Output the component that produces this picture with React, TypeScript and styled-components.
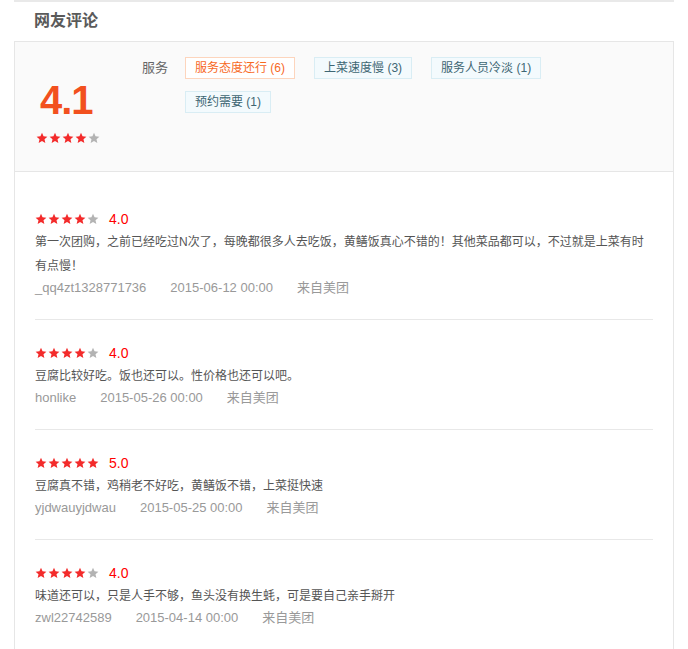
import React from 'react';
import styled, { createGlobalStyle } from 'styled-components';

const GlobalStyle = createGlobalStyle`
  html, body {
    margin: 0;
    padding: 0;
    background: #fff;
  }
  body {
    font-family: "Liberation Sans", "Noto Sans CJK SC", sans-serif;
    color: #555;
  }
`;

type Tag = { label: string; count: number; positive?: boolean };

type Review = {
  score: number;
  text: string;
  user: string;
  time: string;
  source: string;
};

const tags: Tag[] = [
  { label: '服务态度还行', count: 6, positive: true },
  { label: '上菜速度慢', count: 3 },
  { label: '服务人员冷淡', count: 1 },
  { label: '预约需要', count: 1 },
];

const reviews: Review[] = [
  {
    score: 4,
    text: '第一次团购，之前已经吃过N次了，每晚都很多人去吃饭，黄鳝饭真心不错的！其他菜品都可以，不过就是上菜有时有点慢！',
    user: '_qq4zt1328771736',
    time: '2015-06-12 00:00',
    source: '来自美团',
  },
  {
    score: 4,
    text: '豆腐比较好吃。饭也还可以。性价格也还可以吧。',
    user: 'honlike',
    time: '2015-05-26 00:00',
    source: '来自美团',
  },
  {
    score: 5,
    text: '豆腐真不错，鸡稍老不好吃，黄鳝饭不错，上菜挺快速',
    user: 'yjdwauyjdwau',
    time: '2015-05-25 00:00',
    source: '来自美团',
  },
  {
    score: 4,
    text: '味道还可以，只是人手不够，鱼头没有换生蚝，可是要自己亲手掰开',
    user: 'zwl22742589',
    time: '2015-04-14 00:00',
    source: '来自美团',
  },
];

const Star: React.FC<{ on: boolean }> = ({ on }) => (
  <StarSvg viewBox="0 0 24 24" $on={on}>
    <polygon points="12,1.5 15.1,8.6 22.8,9.3 17,14.4 18.7,22 12,18 5.3,22 7,14.4 1.2,9.3 8.9,8.6" />
  </StarSvg>
);

const Stars: React.FC<{ value: number }> = ({ value }) => (
  <StarRow>
    {[1, 2, 3, 4, 5].map((i) => (
      <Star key={i} on={i <= Math.round(value)} />
    ))}
  </StarRow>
);

const App: React.FC = () => {
  return (
    <>
      <GlobalStyle />
      <Section>
        <Title>网友评论</Title>
        <Box>
          <Summary>
            <ScoreColumn>
              <BigScore>4.1</BigScore>
              <Stars value={4.1} />
            </ScoreColumn>
            <TagLabel>服务</TagLabel>
            <TagList>
              {tags.map((t) => (
                <TagItem key={t.label} $positive={t.positive}>
                  {t.label} ({t.count})
                </TagItem>
              ))}
            </TagList>
          </Summary>
          <ReviewList>
            {reviews.map((r, i) => (
              <ReviewItem key={i}>
                <RatingRow>
                  <Stars value={r.score} />
                  <RatingValue>{r.score.toFixed(1)}</RatingValue>
                </RatingRow>
                <ReviewText>{r.text}</ReviewText>
                <Meta>
                  <span>{r.user}</span>
                  <span>{r.time}</span>
                  <span>{r.source}</span>
                </Meta>
              </ReviewItem>
            ))}
          </ReviewList>
        </Box>
      </Section>
    </>
  );
};

export default App;

const Section = styled.section`
  margin: 0 14px;
  border-top: 2px solid #e9e9e9;
`;

const Title = styled.h2`
  margin: 0;
  height: 39px;
  line-height: 38px;
  padding-left: 20px;
  font-size: 16px;
  font-weight: bold;
  color: #5a5a5a;
`;

const Box = styled.div`
  border: 1px solid #e6e6e6;
  border-bottom: none;
`;

const Summary = styled.div`
  display: flex;
  align-items: flex-start;
  height: 130px;
  background: #fafafa;
  border-bottom: 1px solid #e6e6e6;
  box-sizing: border-box;
`;

const ScoreColumn = styled.div`
  width: 106px;
  padding: 38px 0 0 21px;
  display: flex;
  flex-direction: column;
  align-items: flex-start;
`;

const BigScore = styled.div`
  font-size: 40px;
  line-height: 40px;
  font-weight: bold;
  color: #f2501e;
  padding-left: 4px;
  letter-spacing: -1px;
  margin-bottom: 12px;
`;

const StarRow = styled.span`
  display: inline-flex;
  gap: 1px;
`;

const StarSvg = styled.svg<{ $on: boolean }>`
  width: 12px;
  height: 12px;
  fill: ${(p) => (p.$on ? '#f32b2b' : '#b3b3b3')};
`;

const TagLabel = styled.div`
  margin-top: 15px;
  width: 43px;
  line-height: 22px;
  font-size: 13px;
  color: #666;
`;

const TagList = styled.div`
  margin-top: 15px;
  width: 380px;
  display: flex;
  flex-wrap: wrap;
  column-gap: 19px;
  row-gap: 12px;
  align-content: flex-start;
`;

const TagItem = styled.span<{ $positive?: boolean }>`
  height: 22px;
  line-height: 20px;
  box-sizing: border-box;
  padding: 0 9px;
  font-size: 12px;
  border: 1px solid ${(p) => (p.$positive ? '#fdd5bd' : '#d9edf4')};
  background: ${(p) => (p.$positive ? '#fff' : '#f3fafd')};
  color: ${(p) => (p.$positive ? '#f7691f' : '#3e6673')};
`;

const ReviewList = styled.div`
  padding: 14px 20px 0;
`;

const ReviewItem = styled.div`
  padding: 24px 0 21px;
  border-bottom: 1px solid #e8e8e8;

  &:last-child {
    border-bottom: none;
  }
`;

const RatingRow = styled.div`
  display: flex;
  align-items: center;
  height: 18px;
  gap: 10px;
  margin-bottom: 2px;
`;

const RatingValue = styled.span`
  font-size: 14px;
  color: #f00;
`;

const ReviewText = styled.p`
  margin: 0;
  font-size: 12px;
  line-height: 24px;
  color: #555;
`;

const Meta = styled.div`
  display: flex;
  gap: 24px;
  line-height: 20px;
  font-size: 13px;
  color: #999;
`;
